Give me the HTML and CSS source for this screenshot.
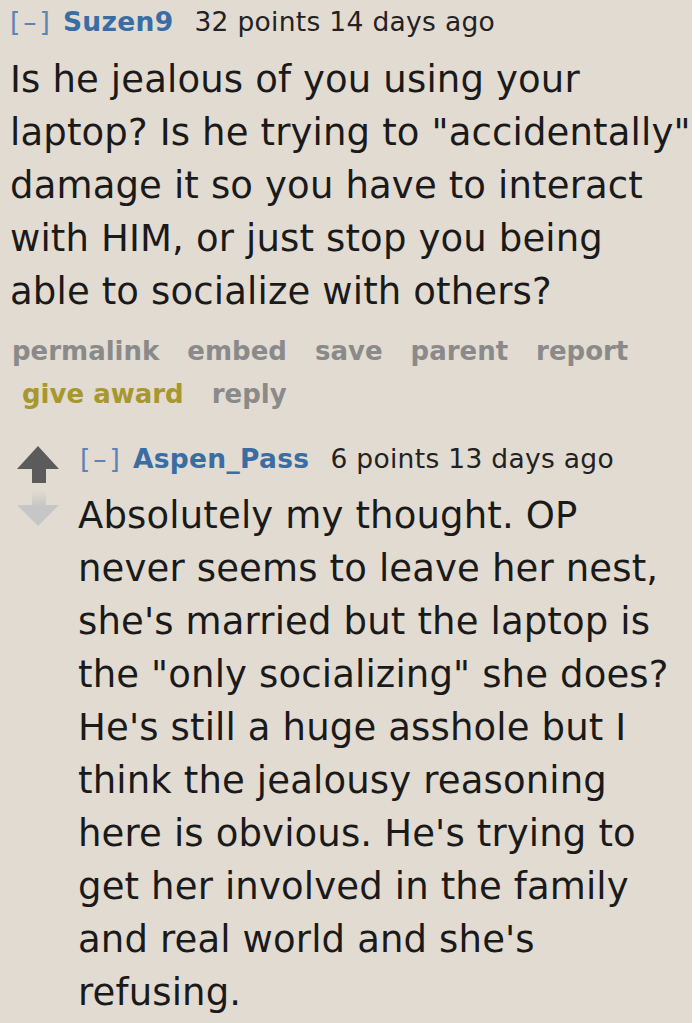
FILE: index.html
```html
<!DOCTYPE html>
<html>
<head>
<meta charset="utf-8">
<link rel="stylesheet" href="styles.css">
</head>
<body>
<div class="panel">
  <div class="comment">
    <p class="tagline"><span class="expand">[–]</span><span class="author">Suzen9</span><span class="score">32 points</span> <span class="time">14 days ago</span></p>
    <div class="md">Is he jealous of you using your<br>laptop? Is he trying to "accidentally"<br>damage it so you have to interact<br>with HIM, or just stop you being<br>able to socialize with others?</div>
    <ul class="buttons">
      <li>permalink</li>
      <li>embed</li>
      <li>save</li>
      <li>parent</li>
      <li>report</li>
      <li class="award wrap-start">give award</li>
      <li>reply</li>
    </ul>
    <div class="child">
      <div class="arrows">
        <svg class="arrow up" width="42" height="37" viewBox="0 0 42 37"><path d="M21 0 L42 23 L29 23 L29 37 L15 37 L15 23 L0 23 Z" fill="#5b5b5b"/></svg>
        <svg class="arrow down" width="42" height="36" viewBox="0 0 42 36">
          <defs><linearGradient id="fade" x1="0" y1="0" x2="0" y2="1"><stop offset="0" stop-color="#c6c6c6" stop-opacity="0"/><stop offset="0.45" stop-color="#c6c6c6" stop-opacity="1"/><stop offset="1" stop-color="#c6c6c6"/></linearGradient></defs>
          <path d="M15 0 L29 0 L29 15 L42 15 L21 36 L0 15 L15 15 Z" fill="url(#fade)"/>
        </svg>
      </div>
      <div class="entry">
        <p class="tagline"><span class="expand">[–]</span><span class="author">Aspen_Pass</span><span class="score">6 points</span> <span class="time">13 days ago</span></p>
        <div class="md">Absolutely my thought. OP<br>never seems to leave her nest,<br>she's married but the laptop is<br>the "only socializing" she does?<br>He's still a huge asshole but I<br>think the jealousy reasoning<br>here is obvious. He's trying to<br>get her involved in the family<br>and real world and she's<br>refusing.</div>
      </div>
    </div>
  </div>
</div>
</body>
</html>
```
FILE: styles.css
```css
html, body {
  margin: 0;
  padding: 0;
  background: #ffffff;
}
body {
  font-family: "DejaVu Sans", Verdana, sans-serif;
  color: #1c1c1c;
  overflow: hidden;
}
.panel {
  width: 692px;
  height: 1023px;
  background: #e2dbd2;
}
.comment {
  padding: 4px 0 0 10px;
}
.tagline {
  margin: 0;
  font-size: 26.5px;
  line-height: 36px;
  letter-spacing: 0.3px;
  color: #222;
  white-space: nowrap;
}
.expand {
  color: #5c84b4;
  margin-right: 10px;
  letter-spacing: 3px;
}
.author {
  color: #3a6da3;
  font-weight: bold;
  margin-right: 21px;
  letter-spacing: 0.3px;
}
.md {
  font-size: 37px;
  line-height: 53px;
  letter-spacing: 0.15px;
  margin-top: 13px;
  color: #1a1a1a;
  white-space: nowrap;
}
.buttons {
  list-style: none;
  margin: 12px 0 0 2px;
  padding: 0;
  display: flex;
  flex-wrap: wrap;
  column-gap: 28px;
  font-size: 26px;
  line-height: 43px;
  font-weight: bold;
  color: #8a8a8a;
  width: 660px;
}
.buttons .award {
  color: #a8962f;
}
.buttons .wrap-start {
  margin-left: 10px;
}
.child {
  display: flex;
  margin-top: 25px;
  padding-left: 7px;
}
.arrows {
  display: flex;
  flex-direction: column;
  width: 42px;
  margin-right: 19px;
  padding-top: 5px;
}
.arrow {
  display: block;
}
.arrow.down {
  margin-top: 7px;
}
.entry {
  flex: 1;
}
.entry .tagline {
  padding-left: 2px;
}
.entry .md {
  margin-top: 12px;
}
```
